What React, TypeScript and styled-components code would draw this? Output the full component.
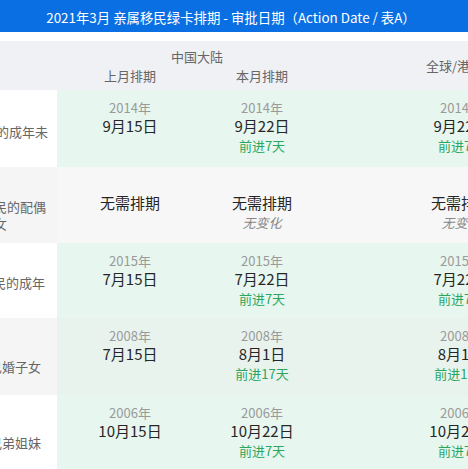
import React from "react";
import styled, { createGlobalStyle } from "styled-components";

const Global = createGlobalStyle`
  html, body { margin: 0; padding: 0; background: #ffffff; overflow: hidden; }
  body { font-family: "Noto Sans CJK SC", "Noto Sans", sans-serif; }
  #root { width: 468px; height: 469px; overflow: hidden; }
`;

const COLS = "57px 146px 118px 280px";

const Page = styled.div`
  width: 468px;
  height: 469px;
  overflow: hidden;
  background: #ffffff;
`;

const TitleBar = styled.div`
  height: 32px;
  background: #0b6fe4;
  color: #ffffff;
  font-size: 13.4px;
  line-height: 34px;
  text-align: center;
  white-space: nowrap;
  padding-right: 6px;
`;

const Gap = styled.div`
  height: 9px;
  background: #ffffff;
`;

const Header = styled.div`
  display: grid;
  grid-template-columns: ${COLS};
  grid-template-rows: 49px;
  background: #f0f1f5;
  color: #666666;
  font-size: 13px;
  width: 601px;
`;

const Group = styled.div`
  grid-column: 2 / span 2;
  display: grid;
  grid-template-columns: 146px 118px;
  grid-template-rows: 22px 27px;
`;

const GroupTitle = styled.div`
  grid-column: 1 / span 2;
  text-align: center;
  padding-left: 16px;
  line-height: 20px;
  padding-top: 6px;
`;

const SubTitle = styled.div`
  text-align: center;
  line-height: 20px;
  padding-top: 3px;
`;

const GlobalTitle = styled.div`
  display: flex;
  align-items: center;
  justify-content: center;
  white-space: nowrap;
`;

const Row = styled.div<{ $bg: string; $h: number }>`
  display: grid;
  grid-template-columns: ${COLS};
  height: ${(p) => p.$h}px;
  background: ${(p) => p.$bg};
  width: 601px;
`;

const LabelCell = styled.div<{ $bg: string; $top: number; $right: number }>`
  background: ${(p) => p.$bg};
  overflow: hidden;
  display: flex;
  justify-content: flex-end;
  align-items: flex-start;
  padding-top: ${(p) => p.$top}px;
  padding-right: ${(p) => p.$right}px;
  color: #666666;
  font-size: 13px;
  line-height: 17px;
`;

const LabelText = styled.div`
  white-space: nowrap;
  text-align: left;
  flex-shrink: 0;
`;

const DataCell = styled.div`
  display: flex;
  flex-direction: column;
  align-items: center;
  padding-top: 9px;
  white-space: nowrap;
`;

const Year = styled.div`
  font-size: 13px;
  line-height: 18px;
  height: 18px;
  color: #9a9a9a;
`;

const DateText = styled.div`
  font-size: 15px;
  line-height: 18px;
  color: #262626;
`;

const Delta = styled.div<{ $muted?: boolean }>`
  font-size: 13px;
  line-height: 22px;
  color: ${(p) => (p.$muted ? "#888888" : "#2aa660")};
  font-style: ${(p) => (p.$muted ? "italic" : "normal")};
`;

type Cell = { y?: string; d: string; delta?: string; muted?: boolean };
type RowData = {
  label: string[];
  top: number;
  right: number;
  labelBg: string;
  bg: string;
  h: number;
  cells: Cell[];
};

const GREEN = "#e7f6ee";

const rows: RowData[] = [
  {
    label: ["美国公民的成年未"],
    top: 33,
    right: 9,
    labelBg: "#ffffff",
    bg: GREEN,
    h: 77,
    cells: [
      { y: "2014年", d: "9月15日" },
      { y: "2014年", d: "9月22日", delta: "前进7天" },
      { y: "2014年", d: "9月22日", delta: "前进7天" },
    ],
  },
  {
    label: ["美国永久居民的配偶", "和未成年子女"],
    top: 31,
    right: 11,
    labelBg: "#f5f5f5",
    bg: "#f6f7f6",
    h: 76,
    cells: [
      { d: "无需排期" },
      { d: "无需排期", delta: "无变化", muted: true },
      { d: "无需排期", delta: "无变化", muted: true },
    ],
  },
  {
    label: ["美国永久居民的成年"],
    top: 31,
    right: 12,
    labelBg: "#ffffff",
    bg: GREEN,
    h: 75,
    cells: [
      { y: "2015年", d: "7月15日" },
      { y: "2015年", d: "7月22日", delta: "前进7天" },
      { y: "2015年", d: "7月22日", delta: "前进7天" },
    ],
  },
  {
    label: ["美国公民的已婚子女"],
    top: 40,
    right: 16,
    labelBg: "#f5f5f5",
    bg: "#e9f3ee",
    h: 77,
    cells: [
      { y: "2008年", d: "7月15日" },
      { y: "2008年", d: "8月1日", delta: "前进17天" },
      { y: "2008年", d: "8月1日", delta: "前进17天" },
    ],
  },
  {
    label: ["美国公民的兄弟姐妹"],
    top: 39,
    right: 16,
    labelBg: "#ffffff",
    bg: GREEN,
    h: 76,
    cells: [
      { y: "2006年", d: "10月15日" },
      { y: "2006年", d: "10月22日", delta: "前进7天" },
      { y: "2006年", d: "10月22日", delta: "前进7天" },
    ],
  },
];

export default function App() {
  return (
    <Page>
      <Global />
      <TitleBar>2021年3月 亲属移民绿卡排期 - 审批日期（Action Date / 表A）</TitleBar>
      <Gap />
      <Header>
        <div />
        <Group>
          <GroupTitle>中国大陆</GroupTitle>
          <SubTitle>上月排期</SubTitle>
          <SubTitle>本月排期</SubTitle>
        </Group>
        <GlobalTitle>全球/港澳台</GlobalTitle>
      </Header>
      {rows.map((r, i) => (
        <Row key={i} $bg={r.bg} $h={r.h}>
          <LabelCell $bg={r.labelBg} $top={r.top} $right={r.right}>
            <LabelText>
              {r.label.map((l, j) => (
                <div key={j}>{l}</div>
              ))}
            </LabelText>
          </LabelCell>
          {r.cells.map((c, j) => (
            <DataCell key={j}>
              <Year>{c.y ?? ""}</Year>
              <DateText>{c.d}</DateText>
              {c.delta && <Delta $muted={c.muted}>{c.delta}</Delta>}
            </DataCell>
          ))}
        </Row>
      ))}
    </Page>
  );
}
